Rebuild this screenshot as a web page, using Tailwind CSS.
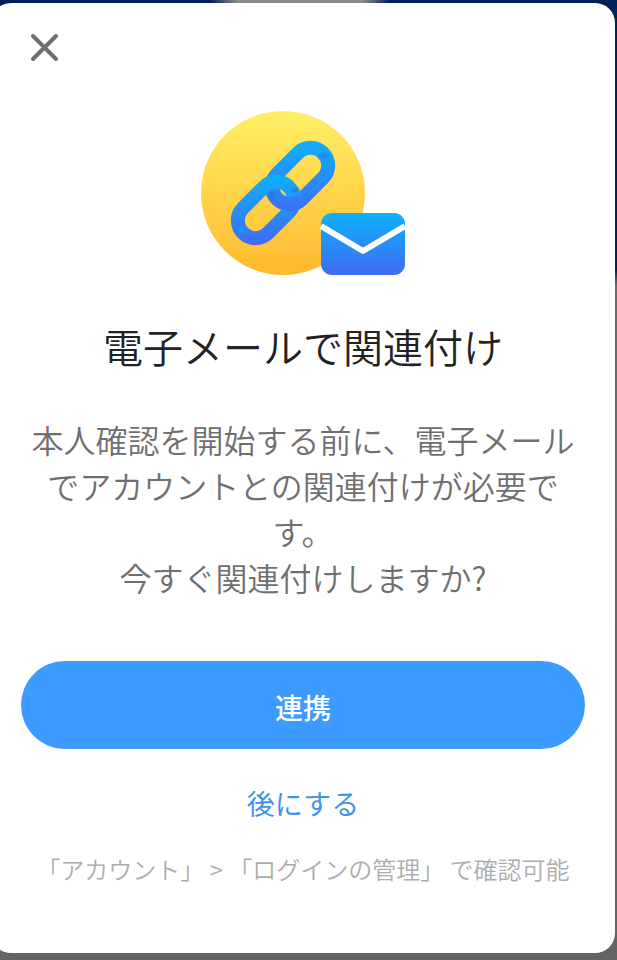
<!DOCTYPE html>
<html lang="ja">
<head>
    <meta charset="UTF-8">
    <meta name="viewport" content="width=device-width, initial-scale=1.0">
    <title>電子メールで関連付け</title>
    <script src="https://cdn.jsdelivr.net/npm/@tailwindcss/browser@4"></script>
</head>
<body class="flow-root min-h-screen overflow-x-hidden bg-[radial-gradient(90px_20px_at_300px_0,#8a8a85_70%,transparent),linear-gradient(#00205c_270px,#6b6b6b_285px,#646464)] bg-no-repeat font-['Noto_Sans_CJK_JP',sans-serif]">
    <div role="dialog" aria-labelledby="title" class="mt-[3px] mr-[2px] mb-[7px] -ml-[9px] rounded-[20px] bg-white px-[30px] pt-6 pb-17 text-center">
        <div class="flex px-2">
            <button type="button" aria-label="閉じる" class="text-[#6f6f6f]">
                <svg class="size-10" viewBox="0 0 40 40" fill="none" stroke="currentColor" stroke-width="4" stroke-linecap="round">
                    <path d="M4 9l23 23M27 9L4 32" />
                </svg>
            </button>
        </div>

        <svg class="mx-auto mt-11 h-[165px] w-[204px]" viewBox="0 0 204 165" fill="none" aria-hidden="true">
            <defs>
                <linearGradient id="sun" x1="0" y1="0" x2="0" y2="1">
                    <stop offset="0" stop-color="#fff066" />
                    <stop offset="1" stop-color="#ffb92f" />
                </linearGradient>
                <linearGradient id="mail" x1="0" y1="0" x2="0" y2="1">
                    <stop offset="0" stop-color="#0eb1f8" />
                    <stop offset="1" stop-color="#3f6bf6" />
                </linearGradient>
                <linearGradient id="linkTop" gradientUnits="userSpaceOnUse" x1="0" y1="30" x2="0" y2="104">
                    <stop offset="0" stop-color="#0eb1f8" />
                    <stop offset="1" stop-color="#3f6bf6" />
                </linearGradient>
                <linearGradient id="linkBottom" gradientUnits="userSpaceOnUse" x1="0" y1="64" x2="0" y2="134">
                    <stop offset="0" stop-color="#0eb1f8" />
                    <stop offset="1" stop-color="#3f6bf6" />
                </linearGradient>
                <radialGradient id="shade">
                    <stop offset="0" stop-color="#1e73dc" stop-opacity="0.7" />
                    <stop offset="1" stop-color="#1e73dc" stop-opacity="0" />
                </radialGradient>
                <radialGradient id="shine">
                    <stop offset="0" stop-color="#1c98fa" />
                    <stop offset="1" stop-color="#1c98fa" stop-opacity="0" />
                </radialGradient>
            </defs>
            <circle cx="82" cy="82" r="82" fill="url(#sun)" />
            <path d="M97 42L76 63A17.5 17.5 0 0 0 101 88L122 67A17.5 17.5 0 0 0 97 42Z" stroke="url(#linkTop)" stroke-width="14" />
            <path d="M63 76L42 97A17.5 17.5 0 0 0 67 122L88 101A17.5 17.5 0 0 0 63 76Z" stroke="url(#linkBottom)" stroke-width="14" />
            <!-- the top link crosses back over the bottom one -->
            <path d="M72 80A17.5 17.5 0 0 0 101 88" stroke="url(#linkTop)" stroke-width="14" />
            <ellipse cx="71" cy="84" rx="5" ry="6" fill="url(#shade)" />
            <ellipse cx="94" cy="79" rx="6" ry="4" fill="url(#shade)" />
            <ellipse cx="123" cy="45" rx="8" ry="5" fill="url(#shade)" />
            <ellipse cx="41" cy="119" rx="8" ry="6" fill="url(#shine)" />
            <rect x="120" y="102" width="84" height="62" rx="11" fill="url(#mail)" />
            <path d="M120 115l42 25 42-25" stroke="#fff" stroke-width="6" stroke-linejoin="round" />
        </svg>

        <h1 id="title" class="mt-10 text-[40px] leading-15 font-[350] text-[#222]">電子メールで関連付け</h1>

        <p class="mt-10 text-[32px] leading-[46px] font-[350] text-[#6f6f6f]">本人確認を開始する前に、電子メールでアカウントとの関連付けが必要です。<br>今すぐ関連付けしますか?</p>

        <button type="button" class="mt-[61px] h-22 w-full rounded-full bg-[#3d9bff] pt-1 text-[28px] font-medium text-white">連携</button>
        <button type="button" class="mt-8 text-[28px] leading-11 text-[#3f96e8]">後にする</button>
        <p class="mt-7 text-2xl font-[350] text-[#adadad]">「アカウント」 &gt; 「ログインの管理」 で確認可能</p>
    </div>
</body>
</html>
